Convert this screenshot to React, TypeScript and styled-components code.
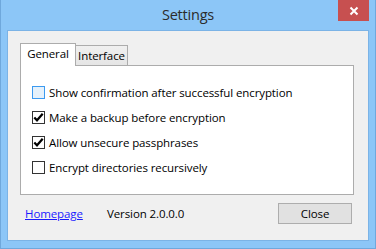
import React from "react";
import styled, { createGlobalStyle } from "styled-components";

const Global = createGlobalStyle`
  html, body { margin: 0; padding: 0; background: #fff; }
  body { font-family: "Open Sans", "Noto Sans", "Liberation Sans", sans-serif; }
`;

const Window = styled.div`
  width: 376px;
  height: 249px;
  box-sizing: border-box;
  background: #8cc6f7;
  border: 1px solid #6fa8dc;
  border-top: none;
  display: flex;
  flex-direction: column;
  position: relative;
`;

const TitleBar = styled.div`
  height: 30px;
  display: flex;
  align-items: center;
  justify-content: center;
  color: #2b2b2b;
  font-size: 14.5px;
  letter-spacing: -0.2px;
  padding-bottom: 1px;
  box-sizing: border-box;
`;

const CloseX = styled.div`
  position: absolute;
  top: 0;
  right: 6px;
  width: 31px;
  height: 21px;
  background: #c75050;
  display: flex;
  align-items: center;
  justify-content: center;
`;

const Client = styled.div`
  margin: 0 6px 0 6px;
  height: 211px;
  box-sizing: border-box;
  border: 1px solid #7bb3e6;
  background: #f0f0f0;
  padding: 12px 0 0 12px;
  display: flex;
  flex-direction: column;
  font-size: 11.5px;
  letter-spacing: -0.1px;
  color: #000;
`;

const TabStrip = styled.div`
  display: flex;
  align-items: flex-start;
  height: 23px;
  margin-bottom: -1px;
`;

const Tab = styled.div<{ $active?: boolean }>`
  box-sizing: border-box;
  position: relative;
  z-index: ${(p) => (p.$active ? 2 : 1)};
  height: ${(p) => (p.$active ? "23px" : "20px")};
  margin-top: ${(p) => (p.$active ? "0" : "2px")};
  width: ${(p) => (p.$active ? "56px" : "53px")};
  border: 1px solid #acacac;
  border-bottom: none;
  margin-left: ${(p) => (p.$active ? "0" : "-1px")};
  background: ${(p) => (p.$active ? "#ffffff" : "linear-gradient(#f0f0f0, #e5e5e5)")};
  display: flex;
  align-items: ${(p) => (p.$active ? "flex-start" : "center")};
  padding-top: ${(p) => (p.$active ? "2px" : "0")};
  justify-content: center;
`;

const Panel = styled.div`
  width: 334px;
  height: 130px;
  box-sizing: border-box;
  border: 1px solid #acacac;
  background: #fff;
  padding: 14px 0 0 11px;
  display: flex;
  flex-direction: column;
`;

const Row = styled.label`
  height: 25px;
  display: flex;
  align-items: center;
  gap: 4px;
`;

const Box = styled.span<{ $focus?: boolean }>`
  width: 13px;
  height: 13px;
  box-sizing: border-box;
  border: 1px solid ${(p) => (p.$focus ? "#3c9af0" : "#333333")};
  background: ${(p) => (p.$focus ? "#e5f1fb" : "#ffffff")};
  display: flex;
  align-items: center;
  justify-content: center;
  flex: none;
`;

const Footer = styled.div`
  display: flex;
  align-items: center;
  margin-top: 8px;
  padding-left: 5px;
  padding-right: 16px;
  height: 21px;
`;

const Link = styled.a`
  color: #1a1aff;
  text-decoration: underline;
  width: 82px;
  cursor: pointer;
`;

const Version = styled.span`
  flex: 1;
`;

const Button = styled.button`
  width: 74px;
  height: 21px;
  box-sizing: border-box;
  border: 1px solid #adadad;
  background: #e1e1e1;
  font-family: inherit;
  font-size: 11.5px;
  letter-spacing: -0.1px;
  color: #000;
  padding: 0;
`;

const Check = () => (
  <svg width="11" height="11" viewBox="0 0 11 11">
    <path d="M1.3 5.4 L4 8.3 L9.7 1.8" fill="none" stroke="#000" strokeWidth="2.2" />
  </svg>
);

const items = [
  { label: "Show confirmation after successful encryption", checked: false, focus: true },
  { label: "Make a backup before encryption", checked: true },
  { label: "Allow unsecure passphrases", checked: true },
  { label: "Encrypt directories recursively", checked: false },
];

export default function App() {
  return (
    <>
      <Global />
      <Window>
        <TitleBar>Settings</TitleBar>
        <CloseX>
          <svg width="10" height="10" viewBox="0 0 10 10">
            <path d="M1.5 1.5 L8.5 8.5 M8.5 1.5 L1.5 8.5" stroke="#fff" strokeWidth="2" />
          </svg>
        </CloseX>
        <Client>
          <TabStrip>
            <Tab $active>General</Tab>
            <Tab>Interface</Tab>
          </TabStrip>
          <Panel>
            {items.map((it) => (
              <Row key={it.label}>
                <Box $focus={it.focus}>{it.checked && <Check />}</Box>
                {it.label}
              </Row>
            ))}
          </Panel>
          <Footer>
            <Link>Homepage</Link>
            <Version>Version 2.0.0.0</Version>
            <Button>Close</Button>
          </Footer>
        </Client>
      </Window>
    </>
  );
}
